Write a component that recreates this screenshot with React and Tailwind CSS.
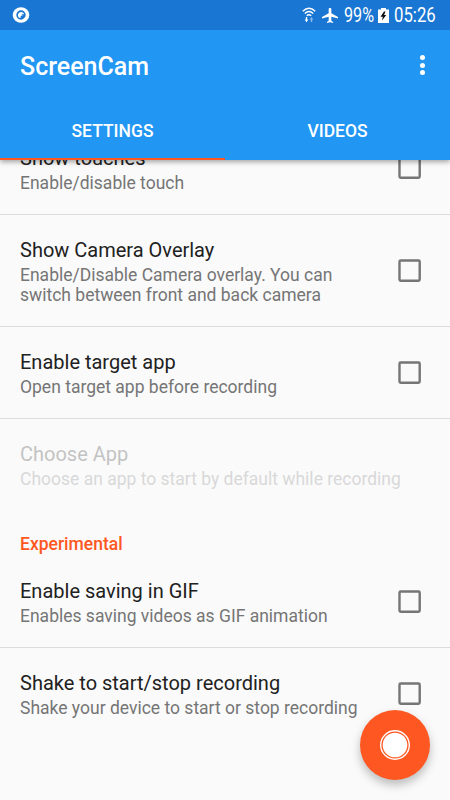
import React, { useState } from 'react';

const generalItems = [
  { id: 'touches', title: 'Show touches', summary: 'Enable/disable touch' },
  {
    id: 'overlay',
    title: 'Show Camera Overlay',
    summary: 'Enable/Disable Camera overlay. You can switch between front and back camera',
  },
  { id: 'target', title: 'Enable target app', summary: 'Open target app before recording' },
];

const experimentalItems = [
  { id: 'gif', title: 'Enable saving in GIF', summary: 'Enables saving videos as GIF animation' },
  { id: 'shake', title: 'Shake to start/stop recording', summary: 'Shake your device to start or stop recording' },
];

function StatusBar() {
  return (
    <div className="h-[30px] bg-[#1976d2] flex items-center justify-between pl-3 pr-[14px] text-white">
      <svg width="18" height="18" viewBox="0 0 18 18">
        <ellipse cx="9" cy="9" rx="8.3" ry="7.7" fill="#fff" />
        <circle cx="9" cy="9" r="4.7" fill="#1976d2" />
        <path d="M6.6 11.4Q5.600 9.800 6.100 8 7.200 5.900 9.300 6q2.300.2 2.900 2.300l-2.700-.1 1.300 1.400-1.900.2-.5 2.100z" fill="#fff" />
        <path d="M10.300 13.800l3.500-3.300.8 3z" fill="#fff" />
      </svg>
      <div className="flex items-center">
        <svg width="14" height="16" viewBox="0 0 14 16" fill="none" stroke="#fff" strokeWidth="1.4">
          <path d="M.8 4.2Q7-1.8 13.2 4.2" />
          <path d="M2.8 6.5Q7 2.4 11.2 6.5" />
          <path d="M4.8 8.7Q7 6.6 9.2 8.7" />
          <path d="M4.5 10v3" />
          <path d="M2.7 12.5h3.6L4.5 15.2z" fill="#fff" stroke="none" />
          <path d="M9.5 15v-3" stroke="#8bb9e8" />
          <path d="M7.7 12.6h3.6L9.5 10z" fill="#8bb9e8" stroke="none" />
        </svg>
        <svg className="ml-[6px]" width="16" height="15" viewBox="3 2 18 20" preserveAspectRatio="none" fill="#fff">
          <path d="M21 16v-2l-7.500-5V3.500C13.500 2.670 12.830 2 12 2s-1.500.67-1.500 1.500V9L3 14v2l7.500-2.500V19L8.500 20.500V22l3.500-1 3.500 1v-1.500L13.500 19v-5.500z" />
        </svg>
        <span className="ml-[6px] w-[31px] pt-px text-[19.5px] leading-[30px] whitespace-nowrap origin-left scale-x-[.83]">99%</span>
        <svg className="ml-[3px]" width="11" height="15" viewBox="0 0 11 15">
          <path d="M3 0h5v1.500h3V15H0V1.500h3z" fill="#fff" />
          <path d="M6 3.500L2.500 8.700h2.300L4 12.500l4.300-5.400H6.100L7.500 3.500z" fill="#111" />
        </svg>
        <span className="ml-[5px] w-[42px] pt-px text-[19.5px] leading-[30px] whitespace-nowrap origin-left scale-x-[.86]">05:26</span>
      </div>
    </div>
  );
}

function Header({ tab, onTab }) {
  return (
    <header className="relative z-10 h-[160px] bg-[#2196f3] text-white shadow-[0_2px_5px_rgba(0,0,0,0.35)]">
      <StatusBar />
      <div className="h-[70px] flex items-center justify-between pl-5 pr-[25px] pt-[3px]">
        <h1 className="text-[25px] leading-[30px] font-medium">ScreenCam</h1>
        <button aria-label="More options" className="flex flex-col gap-[2.5px] mb-[3px]">
          <span className="size-[5px] rounded-full bg-white" />
          <span className="size-[5px] rounded-full bg-white" />
          <span className="size-[5px] rounded-full bg-white" />
        </button>
      </div>
      <div className="h-[60px] grid grid-cols-2">
        {['SETTINGS', 'VIDEOS'].map((label) => (
          <button
            key={label}
            onClick={() => onTab(label)}
            className={`text-[17.5px] leading-[22px] font-medium border-b-[2.5px] pt-[4px] ${
              tab === label ? 'border-[#ff5722]' : 'border-transparent'
            }`}
          >
            {label}
          </button>
        ))}
      </div>
    </header>
  );
}

function PreferenceText({ title, summary }) {
  return (
    <div className="flex-1">
      <div className="text-[20px] leading-[27px] text-[#212121]">{title}</div>
      <div className="mt-px text-[17.5px] leading-[20.5px] text-[#757575]">{summary}</div>
    </div>
  );
}

function CheckRow({ item, checked, onToggle, last }) {
  return (
    <div
      onClick={onToggle}
      className={`flex items-center justify-between pl-5 pr-[29px] pt-[22px] pb-[20.5px] ${
        last ? '' : 'border-b border-[#dcdcdc]'
      }`}
    >
      <PreferenceText title={item.title} summary={item.summary} />
      <svg className="ml-[40px] mb-[2px] shrink-0" width="23" height="23" viewBox="0 0 23 23">
        <rect
          x="1.5"
          y="1.5"
          width="20.2"
          height="20.2"
          rx="1.2"
          fill={checked ? '#757575' : 'none'}
          stroke="#757575"
          strokeWidth="2.4"
        />
      </svg>
    </div>
  );
}

export default function App() {
  const [tab, setTab] = useState('SETTINGS');
  const [values, setValues] = useState({});

  const toggle = (id) => setValues((v) => ({ ...v, [id]: !v[id] }));

  return (
    <div className="relative w-[450px] h-[800px] overflow-hidden bg-[#fafafa] font-[Roboto,sans-serif]">
      <Header tab={tab} onTab={setTab} />

      <main className="h-[640px] overflow-hidden">
        {/* list is scrolled a little under the app bar */}
        <div className="-mt-[37.4px]">
          {generalItems.map((item) => (
            <CheckRow key={item.id} item={item} checked={values[item.id]} onToggle={() => toggle(item.id)} />
          ))}
          <div className="h-[91px] pl-5 pt-[22px] opacity-25">
            <PreferenceText title="Choose App" summary="Choose an app to start by default while recording" />
          </div>

          <h2 className="h-[46px] pl-5 pt-[22.5px] text-[17.5px] leading-[22px] font-medium text-[#ff5722]">
            Experimental
          </h2>
          {experimentalItems.map((item, i) => (
            <CheckRow
              key={item.id}
              item={item}
              checked={values[item.id]}
              onToggle={() => toggle(item.id)}
              last={i === experimentalItems.length - 1}
            />
          ))}
        </div>
      </main>

      <button
        aria-label="Record"
        className="absolute right-5 bottom-5 size-[70px] rounded-full bg-[#ff5722] flex items-center justify-center shadow-[0_5px_10px_rgba(0,0,0,0.25)]"
      >
        <svg width="30" height="30" viewBox="0 0 30 30">
          <circle cx="15" cy="15" r="14.300" fill="none" stroke="#fff" strokeWidth="1.400" />
          <circle cx="15" cy="15" r="12.300" fill="#fff" />
        </svg>
      </button>
    </div>
  );
}
